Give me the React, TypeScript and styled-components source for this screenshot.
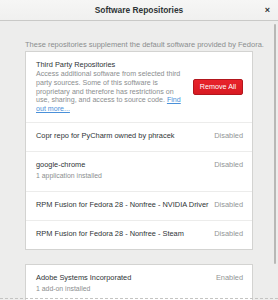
import React from 'react'
import styled, { createGlobalStyle } from 'styled-components'

const GlobalStyle = createGlobalStyle`
  html, body {
    margin: 0;
    padding: 0;
    background: #e8e8e7;
  }
  body {
    font-family: "Liberation Sans", Arial, sans-serif;
    -webkit-font-smoothing: antialiased;
  }
`

const Window = styled.div`
  width: 278px;
  height: 300px;
  overflow: hidden;
  position: relative;
  background: #ededec;
  display: flex;
  flex-direction: column;
`

const HeaderBar = styled.header`
  height: 21px;
  flex: none;
  display: grid;
  grid-template-columns: 1fr auto 1fr;
  align-items: center;
  background: linear-gradient(#f6f6f5, #f0f0ef);
  border-bottom: 1px solid #c9c9c7;
  box-sizing: border-box;
`

const Title = styled.h1`
  grid-column: 2;
  margin: 0;
  font-size: 8.4px;
  font-weight: bold;
  color: #2e3436;
`

const CloseButton = styled.span`
  justify-self: end;
  margin-right: 8px;
  font-size: 9px;
  font-weight: bold;
  color: #2e3436;
  line-height: 1;
`

const Body = styled.div`
  position: relative;
  flex: 1;
  padding: 19px 25px 0 25px;
  overflow: hidden;
`

const Scrollbar = styled.div`
  position: absolute;
  top: 3px;
  right: 2px;
  width: 2px;
  height: 240px;
  border-radius: 1px;
  background: #b8b8b6;
`

const Intro = styled.p`
  margin: 0 0 1px;
  font-size: 7.5px;
  line-height: 10px;
  color: #8b8e8f;
  white-space: nowrap;
`

const Card = styled.section`
  background: #fff;
  border: 1px solid #d3d3d1;
  margin-bottom: 14px;
`

const ThirdParty = styled.div`
  display: flex;
  align-items: center;
  justify-content: space-between;
  padding: 8px 9px 8px 10px;
`

const ThirdPartyText = styled.div`
  width: 150px;
`

const RowTitle = styled.div`
  font-size: 7.4px;
  line-height: 10px;
  color: #2e3436;
  white-space: nowrap;
`

const Description = styled.p`
  margin: 0;
  font-size: 7.1px;
  line-height: 8.8px;
  color: #8b8e8f;
  white-space: nowrap;
`

const Link = styled.a`
  color: #4a90d9;
  text-decoration: underline;
`

const RemoveButton = styled.button`
  width: 50px;
  height: 16px;
  padding: 0;
  border: 1px solid #b2161d;
  border-radius: 2px;
  background: linear-gradient(#e8232b, #d81a22);
  color: #fff;
  font-family: inherit;
  font-size: 7.2px;
`

const Row = styled.div<{ $first?: boolean }>`
  display: flex;
  justify-content: space-between;
  align-items: flex-start;
  padding: 8px 9px 10px 10px;
  border-top: ${({ $first }) => ($first ? 'none' : '1px solid #ececeb')};
`

const Status = styled.span`
  font-size: 7.4px;
  line-height: 10px;
  color: #929595;
`

const SubText = styled.div`
  font-size: 6.9px;
  line-height: 11px;
  color: #8b8e8f;
`

const CutLine = styled.div`
  position: absolute;
  left: 0;
  right: 0;
  bottom: 1px;
  border-top: 1px dashed #c4c4c2;
`

type Repo = { name: string; status: string; sub?: string }

const firstGroup: Repo[] = [
  { name: 'Copr repo for PyCharm owned by phracek', status: 'Disabled' },
  { name: 'google-chrome', status: 'Disabled', sub: '1 application installed' },
  { name: 'RPM Fusion for Fedora 28 - Nonfree - NVIDIA Driver', status: 'Disabled' },
  { name: 'RPM Fusion for Fedora 28 - Nonfree - Steam', status: 'Disabled' },
]

const secondGroup: Repo[] = [
  { name: 'Adobe Systems Incorporated', status: 'Enabled', sub: '1 add-on installed' },
]

function RepoRow({ repo, first }: { repo: Repo; first?: boolean }) {
  return (
    <Row $first={first}>
      <div>
        <RowTitle>{repo.name}</RowTitle>
        {repo.sub && <SubText>{repo.sub}</SubText>}
      </div>
      <Status>{repo.status}</Status>
    </Row>
  )
}

export default function App() {
  return (
    <>
      <GlobalStyle />
      <Window>
        <HeaderBar>
          <Title>Software Repositories</Title>
          <CloseButton>×</CloseButton>
        </HeaderBar>
        <Body>
          <Intro>These repositories supplement the default software provided by Fedora.</Intro>
          <Card>
            <ThirdParty>
              <ThirdPartyText>
                <RowTitle>Third Party Repositories</RowTitle>
                <Description>
                  Access additional software from selected third
                  <br />
                  party sources. Some of this software is
                  <br />
                  proprietary and therefore has restrictions on
                  <br />
                  use, sharing, and access to source code. <Link>Find</Link>
                  <br />
                  <Link>out more...</Link>
                </Description>
              </ThirdPartyText>
              <RemoveButton>Remove All</RemoveButton>
            </ThirdParty>
            {firstGroup.map((repo) => (
              <RepoRow key={repo.name} repo={repo} />
            ))}
          </Card>
          <Card>
            {secondGroup.map((repo) => (
              <RepoRow key={repo.name} repo={repo} first />
            ))}
          </Card>
          <Scrollbar />
        </Body>
        <CutLine />
      </Window>
    </>
  )
}
